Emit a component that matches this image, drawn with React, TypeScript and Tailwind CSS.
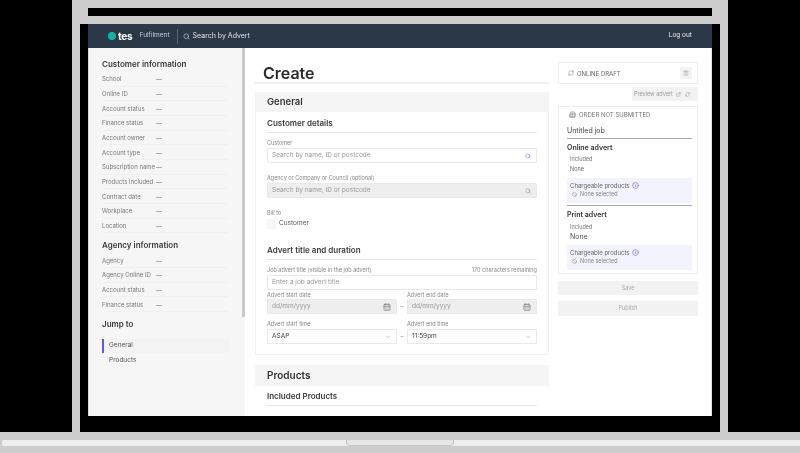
import React from 'react';
import { Search, ChevronDown, CalendarDays, Info, ExternalLink, RefreshCw, Trash2, Building2, Ban } from 'lucide-react';

const customerRows = ['School', 'Online ID', 'Account status', 'Finance status', 'Account owner', 'Account type', 'Subscription name', 'Products included', 'Contract date', 'Workplace', 'Location'];
const agencyRows = ['Agency', 'Agency Online ID', 'Account status', 'Finance status'];

const InfoRow = ({ label }: { label: string }) => (
  <div className="flex h-[14.67px] w-[127px] items-center border-b border-[#f0f0f0] text-[6px] text-[#777]">
    <span className="w-[54px] shrink-0 whitespace-nowrap">{label}</span>
    <span className="text-[#666]">—</span>
  </div>
);

const Label = ({ children }: { children: React.ReactNode }) => (
  <div className="text-[5.5px] leading-[7px] text-[#888]">{children}</div>
);

const SectionTitle = ({ children }: { children: React.ReactNode }) => (
  <div className="flex h-[19px] items-center border-b border-[#e6e6e6] text-[8px] font-semibold text-[#3a3a3a]">{children}</div>
);

const Field = ({ text, gray, icon, dark }: { text: string; gray?: boolean; icon?: React.ReactNode; dark?: boolean }) => (
  <div className={`flex h-[15px] items-center justify-between rounded-[1px] border border-[#e8e8e8] pl-[4px] pr-[5px] text-[6.5px] ${gray ? 'bg-[#eeeeee]' : 'bg-white'} ${dark ? 'text-[#444]' : 'text-[#999]'}`}>
    <span>{text}</span>
    {icon}
  </div>
);

const Chargeable = () => (
  <div className="mt-[4px] h-[25px] rounded-[1px] bg-[#f2f3fd] pl-[3px] pt-[3px]">
    <div className="flex items-center gap-[2px] text-[6px] leading-[9px] text-[#666]">
      Chargeable products <Info size={7} className="text-[#5b63d8]" />
    </div>
    <div className="flex items-center gap-[3px] text-[5.5px] leading-[9px] text-[#888]">
      <Ban size={5} className="ml-[2px]" /> None selected
    </div>
  </div>
);

export default function App() {
  return (
    <div className="flex h-[453px] w-[800px] flex-col overflow-hidden bg-black font-['Inter',sans-serif] blur-[0.3px]">
      {/* Laptop lid */}
      <div className="mx-[72px] flex flex-1 flex-col bg-[#cdcdcd] px-[8px] pt-[8px]">
        <div className="mx-[8px] h-[8px] shrink-0 bg-black" />
        <div className="h-[8px] shrink-0" />
        <div className="flex min-h-0 flex-1 flex-col bg-black px-[8px] pb-[16px]">
          <div className="flex min-h-0 flex-1 flex-col overflow-hidden bg-white">
            {/* Top bar */}
            <header className="flex h-[24px] shrink-0 items-center bg-[#2b3848] pl-[20px] pr-[20px] text-white">
              <div className="h-[8px] w-[8px] rounded-full bg-[#12b5a0]" />
              <span className="ml-[2px] text-[10px] font-bold tracking-[-0.2px]">tes</span>
              <span className="ml-[7px] text-[6.5px] text-[#c4cad2]">Fulfilment</span>
              <div className="ml-[7px] h-[15px] w-px bg-[#5a6675]" />
              <Search size={7} className="ml-[5px] text-[#d5d9de]" />
              <span className="ml-[3px] text-[7px] text-[#dfe3e7]">Search by Advert</span>
              <span className="ml-auto text-[6.5px] text-[#e8ebee]">Log out</span>
            </header>

            <div className="flex min-h-0 flex-1 border-r border-[#e5e5e5]">
              {/* Sidebar */}
              <aside className="relative w-[157px] shrink-0 bg-[#f6f6f6] pl-[14px] pt-[11px] shadow-[inset_1px_0_0_#dddddd]">
                <div className="absolute right-0 top-0 h-[269px] w-[3px] bg-[#c9c9c9]" />
                <div className="h-[10px] text-[8px] font-semibold leading-[10px] text-[#3a3a3a]">Customer information</div>
                <div className="mt-[3px]">{customerRows.map(r => <InfoRow key={r} label={r} />)}</div>
                <div className="mt-[5px] h-[14px] text-[8px] font-semibold leading-[14px] text-[#3a3a3a]">Agency information</div>
                <div className="mt-[1px]">{agencyRows.map(r => <InfoRow key={r} label={r} />)}</div>
                <div className="mt-[5px] h-[14px] text-[8px] font-semibold leading-[14px] text-[#3a3a3a]">Jump to</div>
                <div className="mt-[8px] flex h-[14px] w-[127px] items-center border-l-2 border-[#5b5fd0] bg-[#f3f3f3] pl-[5px] text-[6.5px] text-[#555]">General</div>
                <div className="ml-[7px] mt-0 h-[14px] text-[6.5px] leading-[14px] text-[#555]">Products</div>
              </aside>

              {/* Form */}
              <main className="ml-[10px] w-[294px] shrink-0 overflow-hidden">
                <div className="flex h-[36px] items-end border-b-2 border-[#eeeeee] pl-[8px] text-[16px] font-semibold leading-[18px] text-[#2b2b2b]">Create</div>
                <section className="mt-[8px] border border-t-0 border-[#f2f2f2] pb-[10px]">
                  <div className="flex h-[20px] items-center bg-[#f5f5f5] pl-[11px] text-[9.5px] font-semibold text-[#333]">General</div>
                  <div className="px-[11px]">
                    <div className="pt-[2px]"><SectionTitle>Customer details</SectionTitle></div>
                    <div className="mt-[7px] mb-[1px]"><Label>Customer</Label></div>
                    <Field text="Search by name, ID or postcode" icon={<Search size={6} className="text-[#6a70c8]" />} />
                    <div className="mt-[12px] mb-[1px]"><Label>Agency or Company or Council (optional)</Label></div>
                    <Field text="Search by name, ID or postcode" gray icon={<Search size={6} className="text-[#888]" />} />
                    <div className="mt-[12px]"><Label>Bill to</Label></div>
                    <div className="mt-[2px] flex items-center">
                      <div className="h-[10px] w-[9px] rounded-[1px] bg-[#f6f6f6]" />
                      <span className="ml-[3px] text-[6.5px] text-[#555]">Customer</span>
                    </div>
                    <div className="mt-[12px]"><SectionTitle>Advert title and duration</SectionTitle></div>
                    <div className="mt-[7px] mb-[1px] flex justify-between">
                      <Label>Job advert title (visible in the job advert)</Label>
                      <Label>170 characters remaining</Label>
                    </div>
                    <Field text="Enter a job advert title" />
                    <div className="mt-[2px] grid grid-cols-[130px_10px_130px] items-end">
                      <div>
                        <Label>Advert start date</Label>
                        <Field text="dd/mm/yyyy" gray icon={<CalendarDays size={8} className="text-[#777]" />} />
                      </div>
                      <div className="pb-[4px] text-center text-[6px] text-[#888]">–</div>
                      <div>
                        <Label>Advert end date</Label>
                        <Field text="dd/mm/yyyy" gray icon={<CalendarDays size={8} className="text-[#777]" />} />
                      </div>
                    </div>
                    <div className="mt-[7px] grid grid-cols-[130px_10px_130px] items-end">
                      <div>
                        <div className="mb-[1px]"><Label>Advert start time</Label></div>
                        <Field text="ASAP" dark icon={<ChevronDown size={6} className="text-[#888]" />} />
                      </div>
                      <div className="pb-[4px] text-center text-[6px] text-[#888]">–</div>
                      <div>
                        <div className="mb-[1px]"><Label>Advert end time</Label></div>
                        <Field text="11:59pm" dark icon={<ChevronDown size={6} className="text-[#888]" />} />
                      </div>
                    </div>
                  </div>
                </section>
                <section className="mt-[10px]">
                  <div className="flex h-[21px] items-center bg-[#f5f5f5] pl-[12px] text-[10px] font-semibold text-[#333]">Products</div>
                  <div className="px-[12px] pt-[1px]"><SectionTitle>Included Products</SectionTitle></div>
                </section>
              </main>

              {/* Order summary */}
              <div className="ml-[9px] w-[140px] shrink-0 pt-[14px]">
                <div className="flex h-[22px] items-center border border-[#eeeeee] pl-[9px] pr-[5px] text-[6px] text-[#666]">
                  <RefreshCw size={6} className="text-[#888]" />
                  <span className="ml-[3px]">ONLINE DRAFT</span>
                  <div className="ml-auto flex h-[12px] w-[12px] items-center justify-center bg-[#f3f3f3]"><Trash2 size={6} className="text-[#aaa]" /></div>
                </div>
                <div className="mt-[3px] flex justify-end">
                  <div className="flex h-[14px] w-[66px] items-center bg-[#f2f2f2] pl-[2px] text-[5.5px] text-[#999]">
                    Preview advert
                    <ExternalLink size={5} className="ml-[3px]" />
                    <RefreshCw size={5} className="ml-[4px]" />
                  </div>
                </div>
                <div className="mt-[5px] h-[168px] border border-[#eeeeee] pl-[8px] pr-[5px]">
                  <div className="flex h-[14px] items-center text-[6px] text-[#777]">
                    <Building2 size={7} className="ml-[2px]" />
                    <span className="ml-[3px]">ORDER NOT SUBMITTED</span>
                  </div>
                  <div className="flex h-[18px] items-center border-b border-[#aaaaaa] pt-[3px] text-[7px] text-[#444]">Untitled job</div>
                  <div className="mt-[4px] text-[7px] font-semibold leading-[9px] text-[#333]">Online advert</div>
                  <div className="ml-[3px] mt-[3px] text-[5.5px] leading-[9px] text-[#777]">Included</div>
                  <div className="ml-[3px] text-[5.5px] leading-[10px] text-[#666]">None</div>
                  <Chargeable />
                  <div className="mt-[2px] border-t border-[#aaaaaa]" />
                  <div className="mt-[4px] text-[7px] font-semibold leading-[9px] text-[#333]">Print advert</div>
                  <div className="ml-[3px] mt-[4px] text-[5.5px] leading-[9px] text-[#777]">Included</div>
                  <div className="ml-[3px] text-[7px] leading-[9px] text-[#555]">None</div>
                  <Chargeable />
                </div>
                <div className="mt-[7px] flex h-[14px] items-center justify-center bg-[#f2f2f2] text-[5.5px] text-[#aaa]">Save</div>
                <div className="mt-[6px] flex h-[15px] items-center justify-center bg-[#f2f2f2] text-[5.5px] text-[#aaa]">Publish</div>
              </div>
            </div>
          </div>
        </div>
      </div>

      {/* Laptop base */}
      <div className="relative flex h-[21px] shrink-0 flex-col justify-start bg-[#cdcdcd] pl-[2px] pt-[8px]">
        <div className="h-[6px] rounded-l-[2px] bg-[#eeeeee]" />
        <div className="absolute left-[346px] top-[8px] h-[6px] w-[108px] rounded-b-[4px] border-x border-b border-[#c4c4c4] bg-[#e6e6e6]" />
      </div>
    </div>
  );
}
